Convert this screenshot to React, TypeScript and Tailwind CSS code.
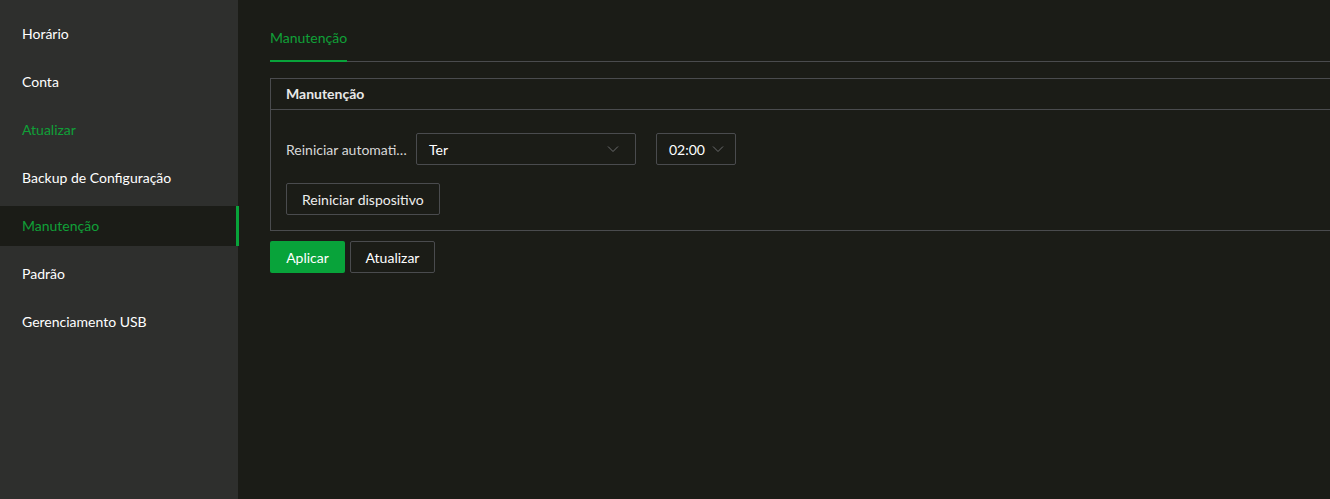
const menu = ['Horário', 'Conta', 'Atualizar', 'Backup de Configuração', 'Manutenção', 'Padrão', 'Gerenciamento USB'];

const font = { fontFamily: '"Segoe UI", Lato, "Noto Sans", sans-serif' };

function Chevron() {
  return (
    <svg width="12" height="8" viewBox="0 0 12 8" className="text-[#6b6c6e]">
      <path d="M1 1.5 L6 6.5 L11 1.5" fill="none" stroke="currentColor" strokeWidth="1" />
    </svg>
  );
}

export default function App() {
  return (
    <div className="flex h-[499px] w-full bg-[#1b1c17] text-[14px] text-white" style={font}>
      <div className="w-[238px] shrink-0 bg-[#2e2f2d] pt-[14px] flex flex-col gap-2">
        {menu.map((m, i) => {
          const active = i === 4;
          const highlight = i === 2 || i === 4;
          return (
            <div
              key={m}
              className={`h-10 flex items-center pl-[22px] pb-[2px] ${active ? 'w-[239px] bg-[#1b1c17] border-r-[3px] border-[#08a33a]' : ''} ${highlight ? 'text-[#10a038]' : 'text-white'}`}
            >
              {m}
            </div>
          );
        })}
      </div>

      <div className="flex-1 pl-8 pt-[27px]">
        <div className="flex border-b border-[#4a4b4e]">
          <div className="h-[35px] text-[#10a038] border-b-2 border-[#08a33a] -mb-px flex items-start">Manutenção</div>
        </div>

        <div className="mt-4 border border-r-0 border-[#4a4b4e]">
          <div className="h-[31px] flex items-center pl-[15px] pb-px font-bold text-[#e8e8e8] border-b border-[#4a4b4e]">Manutenção</div>
          <div className="px-[15px] pt-[23px] pb-[15px]">
            <div className="flex items-center">
              <div className="w-[130px] pr-[9px] text-[#d8d8d8]">
                <div className="whitespace-nowrap overflow-hidden text-ellipsis">Reiniciar automaticamente</div>
              </div>
              <div className="w-[220px] h-8 border border-[#4a4b4e] rounded-[2px] flex items-center justify-between pl-3 pr-4">
                <span>Ter</span>
                <Chevron />
              </div>
              <div className="ml-5 w-20 h-8 border border-[#4a4b4e] rounded-[2px] flex items-center justify-between pl-3 pr-[11px]">
                <span>02:00</span>
                <Chevron />
              </div>
            </div>
            <button className="mt-[18px] h-8 px-[15px] border border-[#4a4b4e] rounded-[2px] text-[#eeeeee]">Reiniciar dispositivo</button>
          </div>
        </div>

        <div className="mt-[10px] flex gap-[5px]">
          <button className="h-8 w-[75px] bg-[#08a33a] rounded-[2px] text-white">Aplicar</button>
          <button className="h-8 w-[85px] border border-[#4a4b4e] rounded-[2px] text-white">Atualizar</button>
        </div>
      </div>
    </div>
  );
}
